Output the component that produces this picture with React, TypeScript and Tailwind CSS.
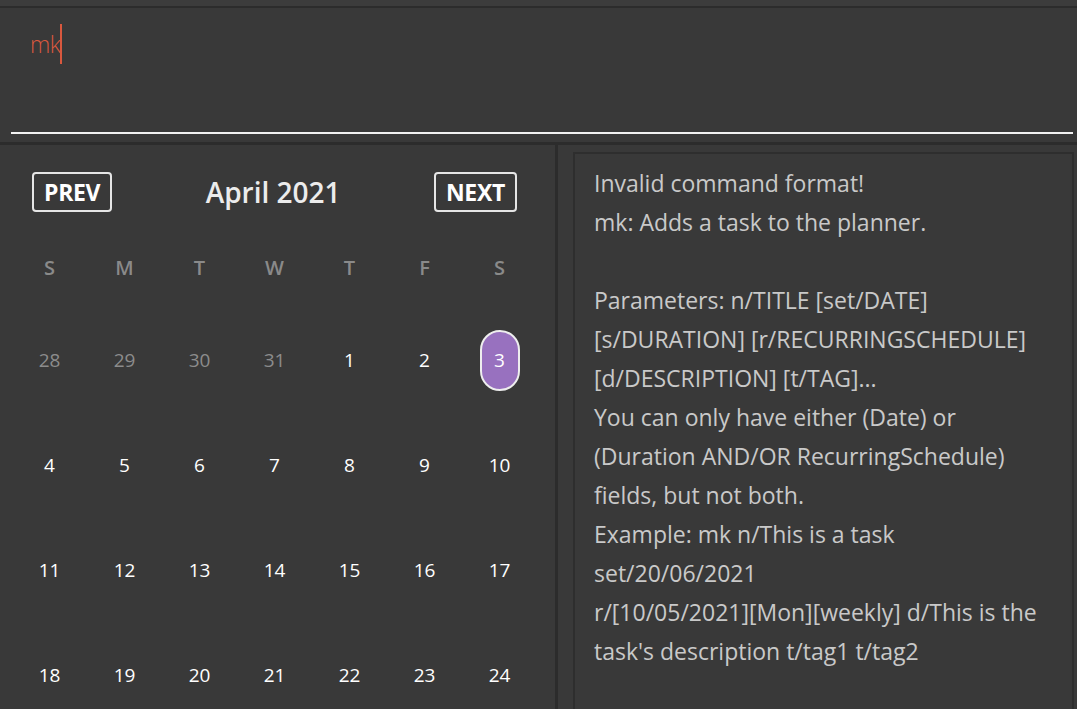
import React from "react";

const days = ["S", "M", "T", "W", "T", "F", "S"];

const weeks: { n: number; other?: boolean; today?: boolean }[][] = [
  [{ n: 28, other: true }, { n: 29, other: true }, { n: 30, other: true }, { n: 31, other: true }, { n: 1 }, { n: 2 }, { n: 3, today: true }],
  [{ n: 4 }, { n: 5 }, { n: 6 }, { n: 7 }, { n: 8 }, { n: 9 }, { n: 10 }],
  [{ n: 11 }, { n: 12 }, { n: 13 }, { n: 14 }, { n: 15 }, { n: 16 }, { n: 17 }],
  [{ n: 18 }, { n: 19 }, { n: 20 }, { n: 21 }, { n: 22 }, { n: 23 }, { n: 24 }],
];

const resultLines = [
  "Invalid command format!",
  "mk: Adds a task to the planner.",
  "",
  "Parameters: n/TITLE [set/DATE]",
  "[s/DURATION] [r/RECURRINGSCHEDULE]",
  "[d/DESCRIPTION] [t/TAG]...",
  "You can only have either (Date) or",
  "(Duration AND/OR RecurringSchedule)",
  "fields, but not both.",
  "Example: mk n/This is a task",
  "set/20/06/2021",
  "r/[10/05/2021][Mon][weekly] d/This is the",
  "task's description t/tag1 t/tag2",
];

const NavButton: React.FC<{ label: string }> = ({ label }) => (
  <button className="h-[40px] px-[10px] rounded-[4px] border-2 border-[#e6e6e6] text-[23px] font-bold text-white leading-none tracking-[-0.3px]">
    {label}
  </button>
);

const Calendar: React.FC = () => {
  return (
    <div className="w-[555px] h-full flex flex-col pt-[26px]">
      <div className="flex items-center justify-between pl-[32px] pr-[38px]">
        <NavButton label="PREV" />
        <span className="text-[28px] font-semibold text-[#ececec]">April 2021</span>
        <NavButton label="NEXT" />
      </div>
      <div className="grid grid-cols-7 w-[525px] ml-[12px] mt-[40px] h-[40px] items-center">
        {days.map((d, i) => (
          <div key={i} className="text-center text-[20px] font-semibold text-[#8a8a8a]">
            {d}
          </div>
        ))}
      </div>
      <div className="w-[525px] ml-[12px] mt-[25px] flex flex-col">
        {weeks.map((week, wi) => (
          <div key={wi} className="grid grid-cols-7 h-[105px] items-center">
            {week.map((d, di) => (
              <div key={di} className="flex justify-center">
                {d.today ? (
                  <div className="w-[40px] h-[61px] rounded-full bg-[#9871bf] border-2 border-[#eeeeee] flex items-center justify-center text-[19px] text-white">
                    {d.n}
                  </div>
                ) : (
                  <span className={d.other ? "text-[19px] text-[#8c8c8c]" : "text-[19px] font-medium text-white"}>{d.n}</span>
                )}
              </div>
            ))}
          </div>
        ))}
      </div>
    </div>
  );
};

export default function App() {
  return (
    <div
      className="w-[1077px] h-[709px] overflow-hidden bg-[#393939] flex flex-col"
      style={{ fontFamily: "'Open Sans', 'Noto Sans', sans-serif" }}
    >
      <div className="h-[6px] bg-[#3c3c3c] border-b-2 border-[#2c2c2c] box-content" />
      <div className="h-[134px] px-[11px] pr-[4px] flex flex-col">
        <div className="flex-1 pl-[19px] pt-[16px]">
          <div className="flex items-start h-[40px]">
            <span className="text-[23px] font-light text-[#d9583e] leading-[40px] tracking-[-0.6px]">mk</span>
            <span className="w-[2px] h-[40px] bg-[#d9583e]" />
          </div>
        </div>
        <div className="h-[2px] bg-[#f2f2f2] mb-[8px]" />
      </div>
      <div className="h-[3px] bg-[#2c2c2c]" />
      <div className="flex-1 flex min-h-0">
        <Calendar />
        <div className="w-[3px] bg-[#2c2c2c]" />
        <div className="flex-1 pl-[15px] pr-[3px] pt-[7px]">
          <div className="h-full border-t-2 border-l-2 border-r-2 border-[#2e2e2e] pl-[19px] pt-[10px] text-[23px] text-[#c9c9c9] leading-[39px]">
            {resultLines.map((l, i) => (
              <div key={i} className="h-[39px] whitespace-pre">
                {l}
              </div>
            ))}
          </div>
        </div>
      </div>
    </div>
  );
}
